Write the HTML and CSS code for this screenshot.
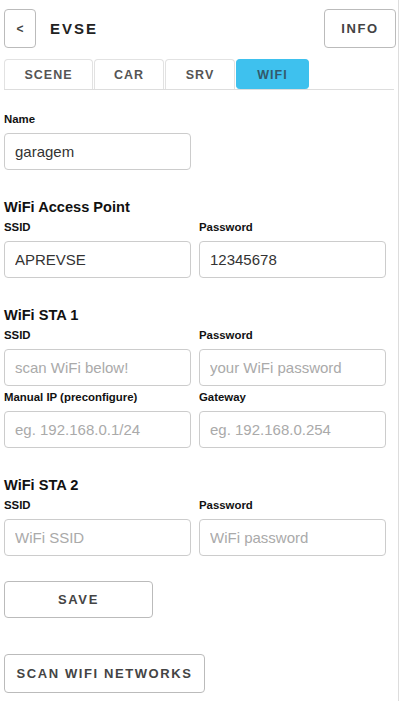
FILE: index.html
```html
<!DOCTYPE html>
<html>
<head>
<meta charset="utf-8">
<link rel="stylesheet" href="styles.css">
</head>
<body>
<div class="page">
  <header class="topbar">
    <button class="btn back">&lt;</button>
    <h1 class="title">EVSE</h1>
    <button class="btn info">INFO</button>
  </header>
  <nav class="tabs">
    <div class="tab">SCENE</div>
    <div class="tab">CAR</div>
    <div class="tab">SRV</div>
    <div class="tab active">WIFI</div>
  </nav>

  <section class="form">
    <div class="row">
      <div class="field">
        <label>Name</label>
        <input type="text" value="garagem">
      </div>
    </div>

    <h2>WiFi Access Point</h2>
    <div class="row">
      <div class="field">
        <label>SSID</label>
        <input type="text" value="APREVSE">
      </div>
      <div class="field">
        <label>Password</label>
        <input type="text" value="12345678">
      </div>
    </div>

    <h2>WiFi STA 1</h2>
    <div class="row">
      <div class="field">
        <label>SSID</label>
        <input type="text" placeholder="scan WiFi below!">
      </div>
      <div class="field">
        <label>Password</label>
        <input type="text" placeholder="your WiFi password">
      </div>
    </div>
    <div class="row tight">
      <div class="field">
        <label>Manual IP (preconfigure)</label>
        <input type="text" placeholder="eg. 192.168.0.1/24">
      </div>
      <div class="field">
        <label>Gateway</label>
        <input type="text" placeholder="eg. 192.168.0.254">
      </div>
    </div>

    <h2>WiFi STA 2</h2>
    <div class="row">
      <div class="field">
        <label>SSID</label>
        <input type="text" placeholder="WiFi SSID">
      </div>
      <div class="field">
        <label>Password</label>
        <input type="text" placeholder="WiFi password">
      </div>
    </div>

    <button class="btn save">SAVE</button>
    <button class="btn scan">SCAN WIFI NETWORKS</button>
  </section>
</div>
</body>
</html>
```

FILE: styles.css
```css
html, body {
  margin: 0;
  padding: 0;
  background: #fff;
}
body {
  font-family: "Liberation Sans", Arial, sans-serif;
  color: #222;
}
.page {
  width: 398px;
  min-height: 701px;
  border-right: 1px solid #ddd;
  box-sizing: content-box;
}
.btn {
  font-family: "Liberation Sans", Arial, sans-serif;
  font-weight: bold;
  font-size: 13px;
  letter-spacing: 1.6px;
  color: #444;
  background: #fff;
  border: 1px solid #bbb;
  border-radius: 4px;
  padding: 0;
  cursor: pointer;
}
.topbar {
  display: flex;
  align-items: center;
  padding: 9px 2px 0 4px;
  height: 39px;
}
.back {
  width: 32px;
  height: 39px;
  letter-spacing: 0;
  font-size: 12px;
}
.title {
  flex: 1;
  margin: 0 0 0 14px;
  font-size: 15px;
  font-weight: bold;
  letter-spacing: 2px;
  color: #222;
}
.info {
  width: 72px;
  height: 39px;
}
.tabs {
  display: flex;
  margin: 11px 4px 0 4px;
  border-bottom: 1px solid #ddd;
  height: 30px;
}
.tab {
  box-sizing: border-box;
  height: 30px;
  width: 89px;
  margin-right: 1px;
  border: 1px solid #e2e2e2;
  border-bottom: none;
  border-radius: 4px 4px 0 0;
  display: flex;
  align-items: center;
  justify-content: center;
  font-size: 12.5px;
  font-weight: bold;
  letter-spacing: 1px;
  color: #555;
}
.tab:nth-child(2), .tab:nth-child(3) { width: 70px; }
.tab.active {
  width: 73px;
  background: #3ec1ee;
  border-color: #3ec1ee;
  border-radius: 4px;
  color: #33596b;
}
.form {
  padding: 22px 4px 0 4px;
}
.row {
  display: flex;
  gap: 8px;
}
.field {
  width: 187px;
  display: flex;
  flex-direction: column;
}
label {
  font-size: 11.4px;
  font-weight: bold;
  color: #111;
  height: 14px;
  line-height: 14px;
  margin-bottom: 7px;
  white-space: nowrap;
}
input {
  box-sizing: border-box;
  width: 187px;
  height: 37px;
  border: 1px solid #ccc;
  border-radius: 4px;
  padding: 0 10px;
  font-family: "Liberation Sans", Arial, sans-serif;
  font-size: 15px;
  color: #333;
  outline: none;
}
input::placeholder {
  color: #aaa;
}
.row.tight { margin-top: 4px; }
h2 {
  font-size: 14.6px;
  font-weight: bold;
  color: #111;
  margin: 28px 0 4px 0;
  line-height: 18px;
}
.save {
  display: block;
  margin-top: 25px;
  width: 149px;
  height: 37px;
}
.scan {
  display: block;
  margin-top: 36px;
  width: 201px;
  height: 39px;
}
```
